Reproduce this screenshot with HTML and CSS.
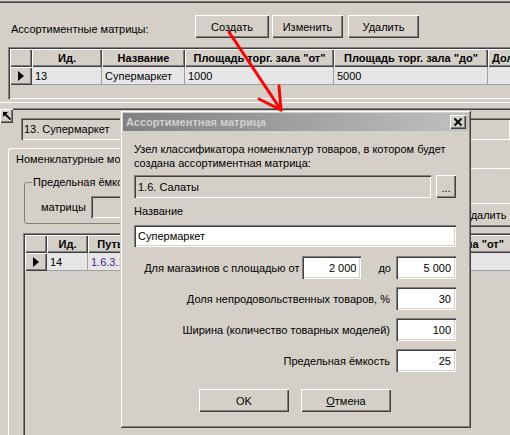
FILE: index.html
```html
<!DOCTYPE html>
<html lang="ru">
<head>
<meta charset="utf-8">
<title>Ассортиментные матрицы</title>
<link rel="stylesheet" href="styles.css">
</head>
<body>
<div class="screen">
  <div class="topline"></div>
  <div class="toolbar">
    <div class="tb-label">Ассортиментные матрицы:</div>
    <div class="btn b-create">Создать</div>
    <div class="btn b-edit">Изменить</div>
    <div class="btn b-del">Удалить</div>
  </div>

  <div class="grid g1">
    <div class="row">
      <div class="hc c-ind"></div>
      <div class="hc g1-id">Ид.</div>
      <div class="hc g1-name">Название</div>
      <div class="hc g1-from">Площадь торг. зала "от"</div>
      <div class="hc g1-to">Площадь торг. зала "до"</div>
      <div class="hc g1-more">Доля</div>
    </div>
    <div class="row">
      <div class="hc c-ind"><svg class="tri" width="6" height="10" viewBox="0 0 6 10"><polygon points="0,0 6,5 0,10" fill="#000"/></svg></div>
      <div class="dc g1-id">13</div>
      <div class="dc g1-name">Супермаркет</div>
      <div class="dc g1-from">1000</div>
      <div class="dc g1-to">5000</div>
      <div class="dc g1-more"></div>
    </div>
  </div>

  <div class="split"></div>

  <div class="lowerhead">
    <div class="btn tiny"><svg width="8" height="8" viewBox="0 0 8 8"><polygon points="0,0 5,0 0,5" fill="#000"/><line x1="1" y1="1" x2="7.5" y2="7.5" stroke="#000" stroke-width="1.8"/></svg></div>
    <div class="hline"></div>
  </div>
  <div class="edit ro namefield">13. Супермаркет</div>

  <div class="tabctl">
    <div class="tabstrip">
      <div class="tab">Номенклатурные модели</div>
      <div class="tabfill"></div>
    </div>
    <div class="tabpage">
      <div class="pagerow">
        <fieldset class="grp">
          <legend>Предельная ёмкость</legend>
          <div class="grp-row"><span class="grp-lbl">матрицы</span><div class="edit grp-edit"></div></div>
        </fieldset>
        <div class="btn p-del">Удалить</div>
      </div>
      <div class="grid g2">
        <div class="row">
          <div class="hc c-ind"></div>
          <div class="hc g2-id">Ид.</div>
          <div class="hc g2-path">Путь</div>
          <div class="hc g2-name"></div>
          <div class="hc g2-x"></div>
          <div class="hc g2-from">Площадь торг. зала "от"</div>
        </div>
        <div class="row">
          <div class="hc c-ind"><svg class="tri" width="6" height="10" viewBox="0 0 6 10"><polygon points="0,0 6,5 0,10" fill="#000"/></svg></div>
          <div class="dc g2-id">14</div>
          <div class="dc g2-path path">1.6.3.1</div>
          <div class="dc g2-name"></div>
          <div class="dc g2-x"></div>
          <div class="dc g2-from"></div>
        </div>
      </div>
    </div>
  </div>

  <div class="dialog">
    <div class="titlebar">
      <span class="ttl">Ассортиментная матрица</span>
      <div class="btn close"><svg width="16" height="14" viewBox="0 0 16 14"><path d="M4.5 3.5L11.5 10.5M11.5 3.5L4.5 10.5" stroke="#000" stroke-width="1.8"/></svg></div>
    </div>
    <div class="dbody">
      <div class="note">Узел классификатора номенклатур товаров, в котором будет<br>создана ассортиментная матрица:</div>
      <div class="noderow">
        <div class="edit ro nodefield">1.6. Салаты</div>
        <div class="btn dots">...</div>
      </div>
      <div class="dlabel">Название</div>
      <div class="edit namebox">Супермаркет</div>
      <div class="frow first">
        <span class="flabel fl-first">Для магазинов с площадью от</span>
        <div class="edit num n-from">2 000</div>
        <span class="upto">до</span>
        <div class="edit num">5 000</div>
      </div>
      <div class="frow">
        <span class="flabel">Доля непродовольственных товаров, %</span>
        <div class="edit num">30</div>
      </div>
      <div class="frow">
        <span class="flabel">Ширина (количество товарных моделей)</span>
        <div class="edit num">100</div>
      </div>
      <div class="frow">
        <span class="flabel">Предельная ёмкость</span>
        <div class="edit num">25</div>
      </div>
      <div class="dbtns">
        <div class="btn dbtn">OK</div>
        <div class="btn dbtn"><u>О</u>тмена</div>
      </div>
    </div>
  </div>

  <svg class="arrow" width="510" height="435" viewBox="0 0 510 435">
    <line x1="229" y1="32" x2="281" y2="110" stroke="#f00" stroke-width="3" stroke-linecap="round"/>
    <polyline points="259,99 281,110 279,86" fill="none" stroke="#f00" stroke-width="3" stroke-linecap="round" stroke-linejoin="round"/>
  </svg>
</div>
</body>
</html>
```

FILE: styles.css
```css
* { box-sizing: border-box; }
html, body { margin: 0; padding: 0; }
body {
  background: #d4d0c8;
  font-family: "Liberation Sans", Arial, sans-serif;
  font-size: 11px;
  line-height: 14px;
  color: #000;
}
.screen {
  position: relative;
  width: 510px;
  height: 435px;
  overflow: hidden;
  background: #d4d0c8;
}

/* generic 3D widgets */
.btn {
  display: flex;
  align-items: center;
  justify-content: center;
  flex: none;
  background: #d4d0c8;
  box-shadow: inset 1px 1px #fff, inset -1px -1px #404040, inset -2px -2px #808080;
  white-space: nowrap;
}
.edit {
  display: flex;
  align-items: center;
  padding: 0 4px;
  background: #fff;
  white-space: nowrap;
  overflow: hidden;
  box-shadow: inset 1px 1px #808080, inset 2px 2px #404040, inset -1px -1px #fff, inset -2px -2px #d4d0c8;
}
.edit.ro { background: #d4d0c8; }

/* top */
.topline {
  margin-top: 1px;
  height: 2px;
  background: #808080;
  border-bottom: 1px solid #404040;
}
.toolbar {
  display: flex;
  align-items: flex-start;
  height: 44px;
  padding-left: 11px;
}
.tb-label {
  width: 184px;
  padding-top: 19px;
  white-space: nowrap;
}
.toolbar .btn { margin-top: 12px; height: 23px; }
.b-create { width: 74px; }
.b-edit { width: 71px; margin-left: 3px; }
.b-del { width: 71px; margin-left: 5px; }

/* grids */
.grid {
  padding: 2px 0 0 2px;
  overflow: hidden;
  background: #d4d0c8;
  box-shadow: inset 1px 1px #808080, inset 2px 2px #404040, inset -1px -1px #fff, inset -2px -2px #d4d0c8;
}
.row { display: flex; height: 18px; }
.hc {
  flex: none;
  display: flex;
  align-items: center;
  justify-content: center;
  font-weight: bold;
  white-space: nowrap;
  overflow: hidden;
  box-shadow: inset 1px 1px #fff, inset -1px -1px #404040, inset -2px -2px #808080;
}
.dc {
  flex: none;
  display: flex;
  align-items: center;
  padding-left: 3px;
  background: #e6e6e6;
  border-right: 1px solid #a0a0a0;
  border-bottom: 1px solid #a0a0a0;
  white-space: nowrap;
  overflow: hidden;
}
.c-ind { width: 22px; }
.tri { display: block; }

.g1 { margin-left: 8px; width: 520px; height: 52px; }
.g1-id { width: 70px; }
.g1-name { width: 83px; }
.g1-from { width: 149px; }
.g1-to { width: 154px; }
.g1-more { width: 150px; }
.hc.g1-more { justify-content: flex-start; padding-left: 4px; }

.split {
  margin-top: 3px;
  height: 1px;
  background: #fff;
}

/* lower panel */
.lowerhead {
  display: flex;
  align-items: flex-start;
  height: 10px;
  margin-top: 5px;
}
.tiny { width: 13px; height: 14px; margin-top: 1px; }
.tiny svg { display: block; }
.hline {
  flex: 1;
  height: 2px;
  border-top: 1px solid #808080;
  border-bottom: 1px solid #404040;
}
.namefield {
  margin-left: 21px;
  height: 22px;
  padding-left: 3px;
}

.tabctl { margin: 8px 0 0 8px; }
.tabstrip { display: flex; height: 21px; }
.tab {
  width: 150px;
  display: flex;
  align-items: center;
  padding-left: 7px;
  border-top: 1px solid #fff;
  border-left: 1px solid #fff;
  border-right: 1px solid #404040;
  border-radius: 3px 3px 0 0;
  white-space: nowrap;
}
.tabfill { flex: 1; border-bottom: 1px solid #fff; }
.tabpage {
  border-left: 1px solid #fff;
  height: 300px;
  padding: 6px 0 0 14px;
}
.pagerow {
  display: flex;
  align-items: flex-start;
  height: 49px;
}
.grp {
  flex: none;
  margin: 0 0 0 1px;
  width: 300px;
  min-width: 0;
  padding: 7px 5px 5px 7px;
  border: 1px solid #808080;
  border-radius: 3px;
}
.grp legend { padding: 0 1px; line-height: 14px; }
.grp-row { display: flex; align-items: center; height: 22px; }
.grp-lbl { margin-left: 9px; margin-right: 5px; }
.grp-edit { width: 150px; height: 22px; background: #d4d0c8; }
.p-del { width: 71px; height: 24px; margin: 28px 0 0 126px; }

.g2 { margin-top: 9px; width: 510px; height: 220px; }
.g2-id { width: 41px; }
.g2-path { width: 45px; }
.g2-name { width: 125px; }
.g2-x { width: 99px; }
.g2-from { width: 162px; }
.path { color: #4b1a8c; }

/* dialog */
.dialog {
  position: absolute;
  left: 120px;
  top: 110px;
  width: 351px;
  height: 318px;
  padding: 3px;
  background: #d4d0c8;
  box-shadow: inset 1px 1px #d4d0c8, inset -1px -1px #404040, inset 2px 2px #fff, inset -2px -2px #808080;
}
.titlebar {
  display: flex;
  align-items: center;
  height: 18px;
  padding-left: 3px;
  background: linear-gradient(to right, #808080, #c0c0c0);
}
.ttl {
  font-weight: bold;
  color: #d4d0c8;
  white-space: nowrap;
}
.close {
  margin-left: auto;
  margin-right: 2px;
  width: 16px;
  height: 14px;
}
.close svg { display: block; }
.dbody { padding: 0 12px 0 11px; }
.note { margin-top: 11px; white-space: nowrap; }
.noderow { display: flex; margin-top: 5px; height: 23px; }
.nodefield { flex: 1; height: 23px; }
.dots { width: 20px; height: 23px; margin-left: 5px; padding-top: 3px; }
.dlabel { margin-top: 6px; }
.namebox { margin-top: 7px; height: 22px; }
.frow {
  display: flex;
  justify-content: flex-end;
  align-items: center;
  height: 23px;
  margin-top: 8px;
}
.frow.first { margin-top: 9px; }
.flabel { margin-right: 6px; white-space: nowrap; }
.flabel.fl-first { margin-right: 3px; }
.num { width: 60px; height: 23px; justify-content: flex-end; padding-right: 5px; }
.num.n-from { width: 59px; }
.upto { margin: 0 5px 0 17px; }
.dbtns {
  display: flex;
  justify-content: center;
  gap: 12px;
  margin-top: 17px;
}
.dbtn { width: 90px; height: 23px; }

.arrow {
  position: absolute;
  left: 0;
  top: 0;
  pointer-events: none;
}
```
